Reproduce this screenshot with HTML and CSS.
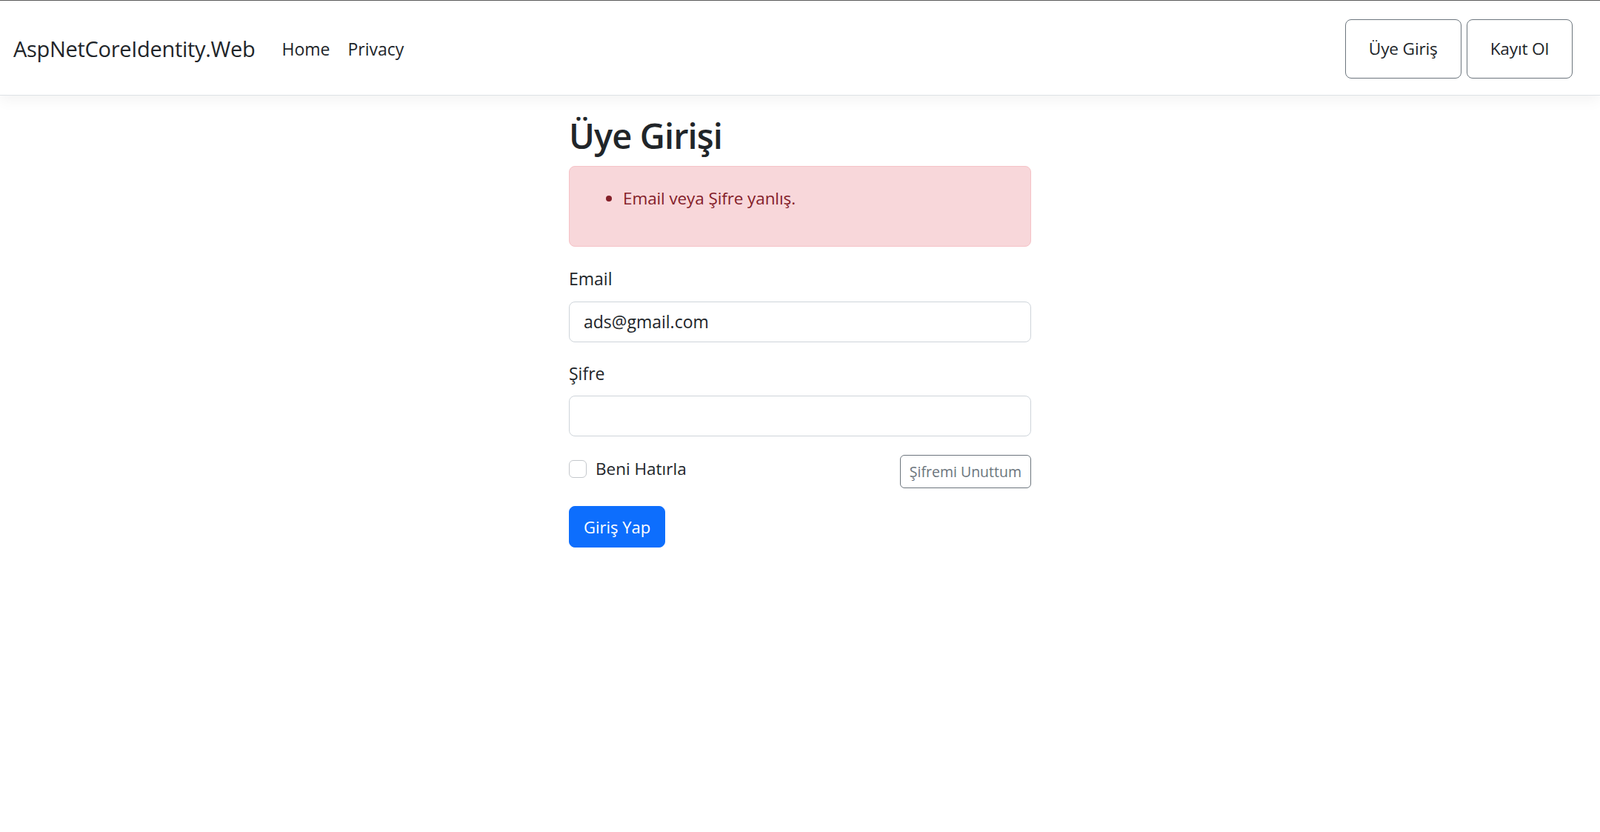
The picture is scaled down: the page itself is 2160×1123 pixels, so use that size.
FILE: index.html
```html
<!DOCTYPE html>
<html lang="tr">
<head>
<meta charset="utf-8">
<title>Üye Girişi - AspNetCoreIdentity.Web</title>
<link rel="stylesheet" href="styles.css">
</head>
<body>
<header class="navbar">
  <div class="nav-left">
    <a class="brand" href="#">AspNetCoreIdentity.Web</a>
    <nav class="nav-links">
      <a class="nav-link" href="#">Home</a>
      <a class="nav-link" href="#">Privacy</a>
    </nav>
  </div>
  <div class="nav-right">
    <a class="nav-btn" href="#">Üye Giriş</a>
    <a class="nav-btn" href="#">Kayıt Ol</a>
  </div>
</header>
<main class="main">
  <div class="login-col">
    <h2 class="title">Üye Girişi</h2>
    <div class="alert">
      <ul class="alert-list">
        <li>Email veya Şifre yanlış.</li>
      </ul>
    </div>
    <form class="form">
      <div class="group">
        <label class="label" for="email">Email</label>
        <input class="input" id="email" type="text" value="ads@gmail.com">
      </div>
      <div class="group">
        <label class="label" for="pw">Şifre</label>
        <input class="input" id="pw" type="password">
      </div>
      <div class="group-row row-between">
        <label class="check">
          <span class="check-box"></span>
          <span class="check-label">Beni Hatırla</span>
        </label>
        <a class="btn-sm" href="#">Şifremi Unuttum</a>
      </div>
      <button class="btn-primary" type="button">Giriş Yap</button>
    </form>
  </div>
</main>
</body>
</html>
```
FILE: styles.css
```css
* { box-sizing: border-box; }
html, body { margin: 0; padding: 0; }
body {
  font-family: "Open Sans", "Noto Sans", sans-serif;
  font-size: 24px;
  line-height: 1.5;
  color: #212529;
  background: #fff;
  border-top: 1px solid #5a5a5a;
  min-height: 1123px;
}
a { text-decoration: none; color: inherit; }

.navbar {
  height: 128px;
  display: flex;
  align-items: center;
  justify-content: space-between;
  padding: 0 37px 0 18px;
  border-bottom: 1px solid #dee2e6;
  box-shadow: 0 6px 18px rgba(0,0,0,0.05);
  margin-bottom: 24px;
}
.nav-left { display: flex; align-items: center; margin-top: 3px; }
.brand {
  font-size: 29px;
  color: #212529;
  margin-right: 24px;
  line-height: 1.5;
  letter-spacing: -0.3px;
}
.nav-links { display: flex; }
.nav-link {
  padding: 12px 12px;
  color: #212529;
  font-size: 23px;
}
.nav-right { display: flex; gap: 7px; margin-top: 2px; }
.nav-btn {
  display: block;
  border: 1px solid #6c757d;
  border-radius: 8px;
  padding: 21px 31px;
  line-height: 36px;
  font-size: 22.7px;
  letter-spacing: -0.2px;
  color: #212529;
}

.main { display: flex; justify-content: center; }
.login-col { width: 624px; }
.title {
  font-size: 47px;
  font-weight: 600;
  line-height: 1.2;
  margin: 2px 0 13px;
  letter-spacing: -0.9px;
}
.alert {
  background: #f8d7da;
  border: 1px solid #f5c2c7;
  border-radius: 8px;
  color: #842029;
  padding: 26px 24px 23px;
  margin-bottom: 26px;
}
.alert-list {
  margin: 0 0 24px;
  padding-left: 48px;
  font-size: 22.5px;
  letter-spacing: -0.1px;
}
.group { margin-bottom: 25px; }
.label { display: block; margin-bottom: 13px; font-size: 23px; }
.input {
  display: block;
  width: 100%;
  height: 55px;
  padding: 9px 19px;
  font-family: inherit;
  font-size: 23px;
  color: #212529;
  border: 1px solid #ced4da;
  border-radius: 8px;
  background: #fff;
  outline: none;
}
.group-row { margin-bottom: 24px; }
.row-between {
  display: flex;
  justify-content: space-between;
  align-items: flex-start;
}
.check { display: flex; align-items: center; height: 36px; margin-top: 1px; }
.check-box {
  width: 24px;
  height: 24px;
  border: 1px solid #c4c8cc;
  border-radius: 6px;
  background: #fff;
  margin-right: 12px;
}
.check-label { font-size: 22.5px; }
.btn-sm {
  display: block;
  border: 1px solid #6c757d;
  border-radius: 6px;
  color: #6c757d;
  font-size: 19.5px;
  line-height: 31px;
  padding: 6px 12px;
}
.btn-primary {
  display: block;
  background: #0d6efd;
  border: 1px solid #0d6efd;
  border-radius: 8px;
  color: #fff;
  font-family: inherit;
  font-size: 22px;
  line-height: 36px;
  padding: 9px 19px;
  cursor: pointer;
}
```
